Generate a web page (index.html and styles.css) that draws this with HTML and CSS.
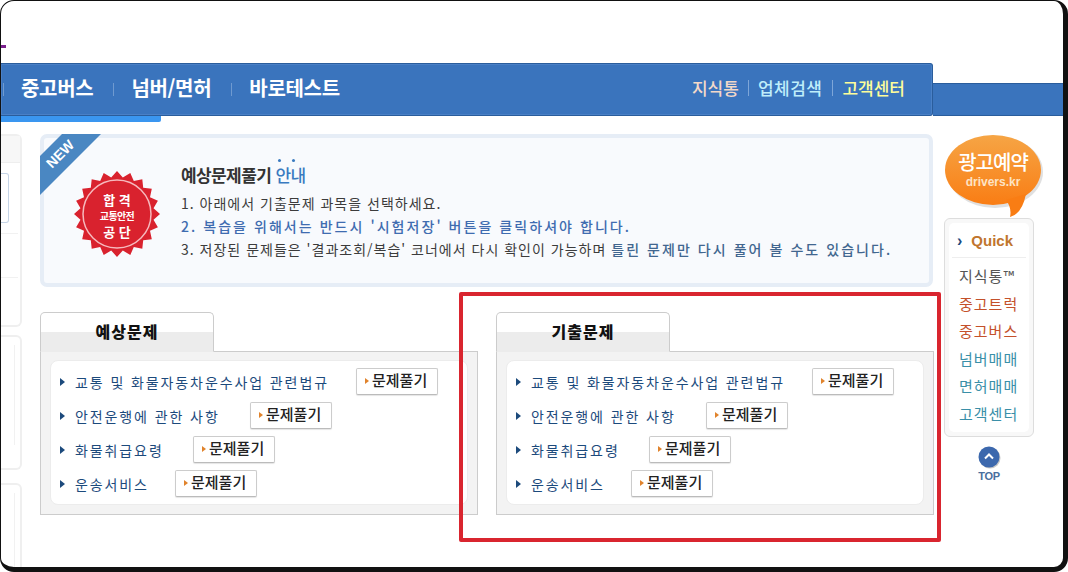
FILE: index.html
```html
<!DOCTYPE html>
<html lang="ko">
<head>
    <meta charset="UTF-8">
    <title>예상문제풀기</title>
    <link rel="stylesheet" href="styles.css">
</head>
<body>
<div class="frame">
    <div class="top"><span class="logo-bit"></span></div>

    <div class="nav">
        <div class="nav-main">
            <ul class="gnb">
                <li>중고버스</li>
                <li>넘버/면허</li>
                <li>바로테스트</li>
            </ul>
            <ul class="util">
                <li class="u1">지식통</li>
                <li class="u2">업체검색</li>
                <li class="u3">고객센터</li>
            </ul>
        </div>
        <div class="nav-strip"></div>
    </div>
    <div class="nav-under"></div>

    <div class="content">
        <div class="side">
            <div class="side-box b1">
                <div class="side-head"></div>
                <div class="side-inner"></div>
                <div class="side-line"></div>
                <div class="side-line"></div>
            </div>
            <div class="side-box b2"><div class="side-inner2"></div></div>
            <div class="side-box b3"><div class="side-inner2"></div></div>
        </div>

        <div class="main">
            <div class="banner">
                <svg class="ribbon" width="62" height="64" viewBox="0 0 62 64">
                    <polygon points="22,0 61,0 0,61 0,22" fill="#4a87c2"/>
                    <text x="12" y="35" transform="rotate(-45 12 35)" class="ribbon-text">NEW</text>
                </svg>
                <svg class="seal" width="88" height="88" viewBox="-44 -44 88 88">
                    <polygon fill="#d9222e" points="43,0 36.5,5.8 40.9,13.3 33,16.8 34.8,25.3 26.2,26.2 25.3,34.8 16.8,33 13.3,40.9 5.8,36.5 0,43 -5.8,36.5 -13.3,40.9 -16.8,33 -25.3,34.8 -26.2,26.2 -34.8,25.3 -33,16.8 -40.9,13.3 -36.5,5.8 -43,0 -36.5,-5.8 -40.9,-13.3 -33,-16.8 -34.8,-25.3 -26.2,-26.2 -25.3,-34.8 -16.8,-33 -13.3,-40.9 -5.8,-36.5 0,-43 5.8,-36.5 13.3,-40.9 16.8,-33 25.3,-34.8 26.2,-26.2 34.8,-25.3 33,-16.8 40.9,-13.3 36.5,-5.8"/>
                    <circle r="34" fill="none" stroke="#f6b9bd" stroke-width="1.5"/>
                    <text y="-15" class="seal-text big">합 격</text>
                    <text y="1" class="seal-text">교통안전</text>
                    <text y="17" class="seal-text big">공 단</text>
                </svg>
                <div class="guide">
                    <h2>예상문제풀기 <em>안내</em></h2>
                    <p class="l1">1. 아래에서 기출문제 과목을 선택하세요.</p>
                    <p class="l2">2. 복습을 위해서는 반드시 '시험저장' 버튼을 클릭하셔야 합니다.</p>
                    <p class="l1">3. 저장된 문제들은 '결과조회/복습' 코너에서 다시 확인이 가능하며 <strong>틀린 문제만 다시 풀어 볼 수도 있습니다.</strong></p>
                </div>
            </div>

            <div class="exams">
                <div class="exam">
                    <div class="tab">예상문제</div>
                    <div class="panel">
                        <ul class="list">
                            <li><span class="sub w1">교통 및 화물자동차운수사업 관련법규</span><a class="btn">문제풀기</a></li>
                            <li><span class="sub w2">안전운행에 관한 사항</span><a class="btn">문제풀기</a></li>
                            <li><span class="sub w3">화물취급요령</span><a class="btn">문제풀기</a></li>
                            <li><span class="sub w4">운송서비스</span><a class="btn">문제풀기</a></li>
                        </ul>
                    </div>
                </div>
                <div class="exam">
                    <div class="tab">기출문제</div>
                    <div class="panel">
                        <ul class="list">
                            <li><span class="sub w1">교통 및 화물자동차운수사업 관련법규</span><a class="btn">문제풀기</a></li>
                            <li><span class="sub w2">안전운행에 관한 사항</span><a class="btn">문제풀기</a></li>
                            <li><span class="sub w3">화물취급요령</span><a class="btn">문제풀기</a></li>
                            <li><span class="sub w4">운송서비스</span><a class="btn">문제풀기</a></li>
                        </ul>
                    </div>
                </div>
            </div>
        </div>

        <div class="right">
            <svg class="bubble" width="100" height="84" viewBox="0 0 100 84">
                <defs>
                    <linearGradient id="org" x1="0" y1="0" x2="0" y2="1">
                        <stop offset="0" stop-color="#f6a545"/>
                        <stop offset="1" stop-color="#f97d14"/>
                    </linearGradient>
                </defs>
                <ellipse cx="51" cy="38" rx="48" ry="36" fill="#ccc" opacity=".6"/>
                <ellipse cx="49" cy="36" rx="48" ry="35" fill="url(#org)"/>
                <path d="M62 66 Q68 74 66 83 Q78 80 82 60 Z" fill="#f97d14"/>
                <text x="49" y="36" class="bubble-big">광고예약</text>
                <text x="49" y="52" class="bubble-small">drivers.kr</text>
            </svg>
            <div class="quick">
                <div class="quick-in">
                    <div class="quick-head"><span class="chev">›</span>Quick</div>
                    <ul class="quick-list">
                        <li>지식통™</li>
                        <li class="red">중고트럭</li>
                        <li class="red">중고버스</li>
                        <li class="teal">넘버매매</li>
                        <li class="teal">면허매매</li>
                        <li class="teal">고객센터</li>
                    </ul>
                </div>
            </div>
            <div class="top-btn">
                <svg width="24" height="24" viewBox="0 0 24 24">
                    <circle cx="13" cy="13" r="10.5" fill="#c8c8c8"/>
                    <circle cx="12" cy="12" r="10.5" fill="#3c68ad"/>
                    <path d="M8 13.5 L12 9.5 L16 13.5" fill="none" stroke="#fff" stroke-width="2"/>
                </svg>
                <span>TOP</span>
            </div>
        </div>
    </div>

    <div class="mark"></div>
</div>
</body>
</html>
```

FILE: styles.css
```css
* {
    margin: 0;
    padding: 0;
    box-sizing: border-box;
}
ul {
    list-style: none;
}
html, body {
    width: 1068px;
    height: 572px;
    overflow: hidden;
    background: #fff;
}
body {
    font-family: "Noto Sans CJK KR", "Liberation Sans", sans-serif;
}

.frame {
    position: relative;
    width: 1068px;
    height: 572px;
    background: #fff;
    border-style: solid;
    border-color: #111;
    border-width: 1px 5px 5px 1px;
    border-radius: 14px;
    overflow: hidden;
}

.top {
    height: 62px;
    position: relative;
}
.logo-bit {
    position: absolute;
    left: 0;
    top: 44px;
    width: 5px;
    height: 3px;
    background: #7a1f8c;
}

/* nav */
.nav {
    display: flex;
    align-items: flex-end;
    height: 53px;
}
.nav-main {
    width: 932px;
    height: 53px;
    display: flex;
    justify-content: space-between;
    align-items: center;
    padding-bottom: 4px;
    background: #3a74bd;
    border: 1px solid #2a5d9c;
    border-left: 0;
    border-radius: 0 3px 3px 0;
    box-shadow: inset 0 0 0 1px #4a80c6;
}
.nav-strip {
    flex: 1;
    height: 33px;
    background: #3a74bd;
    border-top: 1px solid #2a5d9c;
    border-bottom: 1px solid #2a5d9c;
}
.gnb {
    display: flex;
    padding-left: 20px;
    color: #fff;
    font-size: 20px;
    font-weight: 700;
    letter-spacing: -.3px;
}
.gnb li {
    position: relative;
    margin-right: 38px;
}
.gnb li::before {
    content: "";
    position: absolute;
    left: -18px;
    top: 10px;
    width: 1px;
    height: 13px;
    background: #6f9ad0;
}
.util {
    display: flex;
    padding-right: 27px;
    font-size: 17px;
    font-weight: 500;
}
.util li {
    position: relative;
    margin-left: 19px;
}
.util li + li::before {
    content: "";
    position: absolute;
    left: -10px;
    top: 5px;
    width: 1px;
    height: 16px;
    background: #7ea6d8;
}
.u1 { color: #f3d9c9; }
.u2 { color: #bfeefa; letter-spacing: .5px; }
.util .u3 { color: #fdfd9a; margin-left: 20px; }

.nav-under {
    width: 160px;
    height: 6px;
    background: #3a96f0;
    border-radius: 0 0 2px 0;
}

.content {
    display: flex;
    margin-top: 12px;
}

/* cut off left column */
.side {
    width: 21px;
    flex: none;
    margin-right: 18px;
}
.side-box {
    border: 2px solid #efefef;
    border-left: 0;
    border-radius: 0 6px 6px 0;
    margin-bottom: 8px;
}
.b1 { height: 193px; }
.b2 { height: 135px; margin-bottom: 13px; }
.b3 { height: 120px; }
.side-head {
    height: 27px;
    background: #f7f7f7;
    border-bottom: 1px solid #eee;
}
.side-inner {
    width: 8px;
    height: 50px;
    margin-top: 10px;
    border: 1px solid #c5d4e6;
    border-left: 0;
    border-radius: 0 3px 3px 0;
}
.side-line {
    width: 17px;
    height: 44px;
    border-bottom: 1px solid #f1f1f1;
}
.side-line:nth-child(3) {
    height: 11px;
}
.side-inner2 {
    width: 14px;
    height: 100px;
    margin-top: 8px;
    border-right: 1px solid #f1f1f1;
}

/* main column */
.main {
    width: 893px;
    flex: none;
}
.banner {
    position: relative;
    height: 153px;
    display: flex;
    align-items: flex-start;
    padding: 25px 0 0 29px;
    background: #f8fafd;
    border: 4px solid #e6edf6;
    border-radius: 7px;
}
.ribbon {
    position: absolute;
    left: -4px;
    top: -4px;
}
.ribbon-text {
    font-family: "Liberation Sans", sans-serif;
    font-size: 14px;
    font-weight: 700;
    fill: #fff;
}
.seal {
    flex: none;
    margin-top: 7px;
}
.seal-text {
    font-size: 10px;
    font-weight: 700;
    fill: #fff;
    text-anchor: middle;
    dominant-baseline: central;
    letter-spacing: -.6px;
}
.seal-text.big {
    font-size: 13px;
    letter-spacing: 0;
}
.guide {
    margin: -1px 0 0 20px;
    color: #3c3c3c;
    font-size: 14px;
    line-height: 23px;
    white-space: nowrap;
}
.guide h2 {
    font-size: 17px;
    line-height: 26px;
    margin-bottom: 4px;
    color: #333;
    letter-spacing: -.6px;
}
.guide em {
    position: relative;
    font-style: normal;
    font-weight: 500;
    color: #3a7ac0;
}
.guide em::before,
.guide em::after {
    content: "";
    position: absolute;
    top: -3px;
    width: 3px;
    height: 3px;
    border-radius: 50%;
    background: #3a7ac0;
}
.guide em::before { left: 3px; }
.guide em::after { left: 17px; }
.l1 { letter-spacing: 1px; }
.l2 {
    color: #3f6cb0;
    font-weight: 500;
    letter-spacing: 2.05px;
}
.guide strong {
    color: #41668f;
    font-weight: 500;
    letter-spacing: 2.05px;
}

.exams {
    display: flex;
    gap: 18px;
    margin-top: 25px;
}
.exam {
    width: 438px;
    flex: none;
}
.tab {
    width: 174px;
    height: 40px;
    margin-bottom: -1px;
    position: relative;
    background: linear-gradient(#fff 50%, #ececec 50%);
    border: 1px solid #ccc;
    border-bottom: 1px solid #ececec;
    border-radius: 5px 5px 0 0;
    font-size: 16px;
    font-weight: 900;
    letter-spacing: 1px;
    line-height: 36px;
    text-align: center;
    color: #111;
}
.panel {
    height: 164px;
    padding: 8px 9px 9px;
    background: #f3f3f3;
    border: 1px solid #ccc;
}
.list {
    height: 145px;
    padding: 7px 0 0 9px;
    background: #fff;
    border: 1px solid #ececec;
    border-radius: 8px;
}
.list li {
    display: flex;
    align-items: center;
    height: 27px;
    margin-bottom: 7px;
}
.sub {
    position: relative;
    padding-left: 15px;
    color: #1c4a7c;
    font-size: 14px;
    letter-spacing: 1.9px;
    white-space: nowrap;
}
.sub::before {
    content: "";
    position: absolute;
    left: 0;
    top: 6px;
    border-left: 5px solid #1c4a7c;
    border-top: 4px solid transparent;
    border-bottom: 4px solid transparent;
}
.w1 { width: 296px; }
.w2 { width: 190px; }
.w3 { width: 133px; }
.w4 { width: 115px; }
.btn {
    position: relative;
    width: 82px;
    height: 27px;
    padding-left: 15px;
    background: #fff;
    border: 1px solid #ccc;
    border-bottom-color: #bbb;
    border-radius: 2px;
    box-shadow: 0 1px 1px #e5e5e5;
    color: #222;
    font-size: 15px;
    font-weight: 500;
    line-height: 22px;
    white-space: nowrap;
}
.btn::before {
    content: "";
    position: absolute;
    left: 8px;
    top: 9px;
    border-left: 4px solid #e0832c;
    border-top: 3.5px solid transparent;
    border-bottom: 3.5px solid transparent;
}

/* right column */
.right {
    width: 100px;
    margin-left: 11px;
    flex: none;
}
.bubble {
    display: block;
}
.bubble-big {
    font-size: 20px;
    font-weight: 500;
    fill: #fff;
    text-anchor: middle;
    letter-spacing: -1px;
}
.bubble-small {
    font-family: "Liberation Sans", sans-serif;
    font-size: 12px;
    font-weight: 700;
    fill: #fde3c4;
    text-anchor: middle;
}
.quick {
    width: 90px;
    height: 219px;
    padding: 4px;
    border: 1px solid #ddd;
    border-radius: 6px;
    background: #f8f8f8;
}
.quick-in {
    height: 100%;
    padding: 0 3px;
    background: #fff;
    border-radius: 5px;
}
.quick-head {
    height: 35px;
    padding-left: 5px;
    color: #c0752d;
    font-family: "Liberation Sans", sans-serif;
    font-size: 15px;
    font-weight: 700;
    line-height: 36px;
    border-bottom: 1px solid #eee;
}
.chev {
    color: #1c4a7c;
    margin-right: 9px;
    font-size: 16px;
}
.quick-list {
    padding-top: 4px;
    font-size: 15px;
    letter-spacing: 1px;
    color: #555;
}
.quick-list li {
    height: 27.6px;
    line-height: 27px;
    padding-left: 7px;
    white-space: nowrap;
}
.quick-list .red { color: #c4512b; }
.quick-list .teal { color: #3a8fa8; }
.top-btn {
    width: 90px;
    display: flex;
    flex-direction: column;
    align-items: center;
    margin-top: 8px;
}
.top-btn svg {
    display: block;
}
.top-btn span {
    margin-top: 1px;
    color: #4a6f9e;
    font-family: "Liberation Sans", sans-serif;
    font-size: 11px;
    font-weight: 700;
    letter-spacing: -.3px;
}

/* red box drawn over the screenshot */
.mark {
    position: absolute;
    left: 458px;
    top: 291px;
    width: 482px;
    height: 250px;
    border: 4px solid #d9252f;
    border-radius: 2px;
}
```
